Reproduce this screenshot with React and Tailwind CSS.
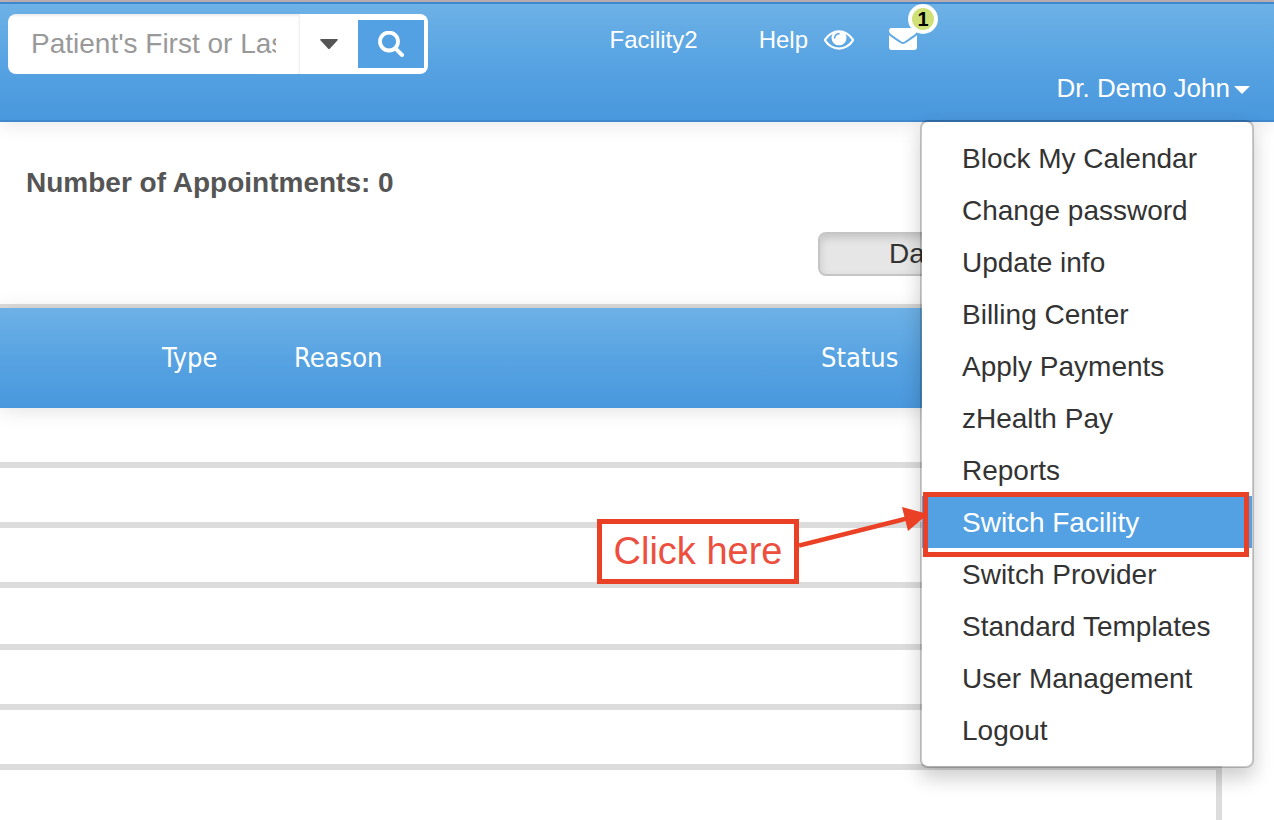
const menuItems = [
  "Block My Calendar",
  "Change password",
  "Update info",
  "Billing Center",
  "Apply Payments",
  "zHealth Pay",
  "Reports",
  "Switch Facility",
  "Switch Provider",
  "Standard Templates",
  "User Management",
  "Logout",
];

const rowHeights = ["h-[60px]", "h-[60px]", "h-[60px]", "h-[62px]", "h-[60px]", "h-[60px]"];

function EyeIcon() {
  return (
    <svg viewBox="0 384 1792 1152" className="h-5 w-[30px]" fill="currentColor" aria-hidden="true">
      <path d="M1664 960q-152-236-381-353 61 104 61 225 0 185-131.5 316.5t-316.5 131.5-316.5-131.5-131.5-316.5q0-121 61-225-229 117-381 353 133 205 333.5 326.5t434.5 121.5 434.5-121.5 333.5-326.5zm-720-384q0-20-14-34t-34-14q-125 0-214.5 89.5t-89.5 214.5q0 20 14 34t34 14 34-14 14-34q0-86 61-147t147-61q20 0 34-14t14-34zm848 384q0 34-20 69-140 230-376.5 368.5t-499.5 138.5-499.5-139-376.5-368q-20-35-20-69t20-69q140-229 376.5-368t499.5-139 499.5 139 376.5 368q20 35 20 69z" />
    </svg>
  );
}

function EnvelopeIcon() {
  return (
    <svg viewBox="0 256 1792 1408" className="h-[22px] w-7" fill="currentColor" aria-hidden="true">
      <path d="M1792 710v794q0 66-47 113t-113 47h-1472q-66 0-113-47t-47-113v-794q44 49 101 87 362 246 497 345 57 42 92.5 65.5t94.5 48 110 24.5h2q51 0 110-24.5t94.5-48 92.5-65.5q170-123 498-345 57-39 100-87zm0-294q0 79-49 151t-122 123q-376 261-468 325-10 7-42.5 31t-54 38.5-52 32.5-57.5 27-50 9h-2q-23 0-50-9t-57.5-27-52-32.5-54-38.5-42.5-31q-91-64-262-182.5t-205-142.5q-62-42-117-115.5t-55-136.5q0-78 41.5-130t118.5-52h1472q65 0 112.5 47t47.5 113z" />
    </svg>
  );
}

function SearchBox() {
  return (
    <form className="mt-2.5 ml-2 flex h-[60px] w-[420px] overflow-hidden rounded-lg bg-white" onSubmit={(e) => e.preventDefault()}>
      <input
        type="text"
        aria-label="Patient search"
        placeholder="Patient's First or Last Name"
        className="min-w-0 flex-1 border-r border-[#f0f0f0] px-[23px] text-[28px] shadow-[inset_0_2px_2px_rgba(0,0,0,0.075)] outline-none placeholder:text-[#999999]"
      />
      <button type="button" aria-label="Search options" className="flex w-[58px] items-center justify-center text-[#555555]">
        <svg viewBox="0 0 18 10" className="h-2.5 w-[18px]" fill="currentColor" aria-hidden="true">
          <path d="M1.2 0H16.8Q18.6.2 17.4 1.6L10 9.4Q9 10.4 8 9.4L.6 1.6Q-.6.2 1.2 0Z" />
        </svg>
      </button>
      <button type="submit" aria-label="Search" className="my-1.5 mr-1 flex w-[66px] items-center justify-center bg-[#53a1e2] text-white">
        <svg viewBox="0 0 26 26" className="size-[26px]" fill="none" stroke="currentColor" aria-hidden="true">
          <circle cx="11" cy="10.5" r="9" strokeWidth="3.8" />
          <path d="M17.4 17.4L24 24" strokeWidth="4" strokeLinecap="round" />
        </svg>
      </button>
    </form>
  );
}

function Callout() {
  return (
    <>
      <div className="pointer-events-none absolute -top-1 right-[3px] -bottom-[9px] left-px border-[5px] border-[#ea4025]" />
      <div className="pointer-events-none absolute top-[23px] right-full mr-[123px] flex h-[65px] w-[202px] items-center justify-center border-[5px] border-[#ea4025] bg-white text-[38px] whitespace-nowrap text-[#ec4f3d]">
        Click here
      </div>
      <svg viewBox="0 0 132 50" className="pointer-events-none absolute top-[5px] right-full -mr-[9px] h-[50px] w-[132px]" aria-hidden="true">
        <path d="M0 44.5L110 17" stroke="#ea4025" strokeWidth="4.6" />
        <path d="M129 13L103 6L109 30Z" fill="#ea4025" />
      </svg>
    </>
  );
}

function UserMenu() {
  return (
    <ul className="absolute top-[116px] right-5 z-20 w-[334px] rounded-lg border-2 border-black/20 bg-white bg-clip-padding py-2.5 shadow-[0_10px_20px_rgba(0,0,0,0.2)]">
      {menuItems.map((item) => {
        const active = item === "Switch Facility";
        return (
          <li key={item} className={active ? "relative bg-[#53a1e2] text-white" : "text-[#333333]"}>
            <a href="#" className="block h-[52px] pl-10 text-[28px] leading-[54px] whitespace-nowrap">
              {item}
            </a>
            {active && <Callout />}
          </li>
        );
      })}
    </ul>
  );
}

function Header() {
  return (
    <header className="relative z-10 border-t-2 border-[#c0b2b2]">
      <div className="relative flex h-[120px] justify-between border-y-2 border-[#3f88ce] bg-linear-to-b from-[#6db1e6] via-[#57a3e2] to-[#4997dd] shadow-[0_2px_20px_rgba(0,0,0,0.1)]">
        <SearchBox />
        <nav className="flex flex-col items-end text-white">
          <div className="mt-4 mr-[357px] flex h-10 items-center text-2xl">
            <a href="#" className="mr-[61px]">Facility2</a>
            <a href="#" className="mr-4">Help</a>
            <a href="#" aria-label="View" className="mr-[35px]">
              <EyeIcon />
            </a>
            <a href="#" aria-label="Messages" className="relative mb-0.5">
              <EnvelopeIcon />
              <span className="absolute -top-6 left-[19px] flex size-[30px] items-center justify-center rounded-full border-4 border-white bg-[#cfe077] text-xl leading-none font-bold text-black">
                1
              </span>
            </a>
          </div>
          <button type="button" className="mt-2 mr-6 flex items-center gap-1 text-[26px] leading-[40px]">
            Dr. Demo John
            <svg viewBox="0 0 16 8" className="mt-1 h-2 w-4" fill="currentColor" aria-hidden="true">
              <path d="M0 0H16L8 8Z" />
            </svg>
          </button>
        </nav>
        <UserMenu />
      </div>
    </header>
  );
}

export default function App() {
  return (
    <div className="overflow-hidden bg-white font-['Liberation_Sans',Arial,sans-serif]">
      <Header />
      <main className="mr-[52px]">
        <h1 className="pt-10 pl-[26px] text-[28px] leading-[42px] font-bold text-[#555555]">Number of Appointments: 0</h1>
        <div className="mt-7 mb-7 flex justify-end pr-[212px]">
          <button
            type="button"
            className="h-11 w-[192px] rounded-lg border-2 border-[#c5c5c5] bg-[#e6e6e6] text-[28px] leading-10 text-[#333333] shadow-[inset_0_4px_8px_rgba(0,0,0,0.15)]"
          >
            Day
          </button>
        </div>
        <table className="w-full table-fixed border-separate border-spacing-0 border-t-4 border-r-[6px] border-[#dcdcdc]">
          <colgroup>
            <col className="w-[162px]" />
            <col className="w-[132px]" />
            <col className="w-[527px]" />
            <col />
          </colgroup>
          <thead>
            <tr className="h-[100px] bg-linear-to-b from-[#6db1e6] via-[#57a3e2] to-[#4997dd] text-left font-['DejaVu_Sans_Condensed','Noto_Sans',sans-serif] text-[27px] text-white shadow-[0_2px_20px_rgba(0,0,0,0.12)]">
              <td />
              <th scope="col" className="p-0 font-normal">Type</th>
              <th scope="col" className="p-0 font-normal">Reason</th>
              <th scope="col" className="p-0 font-normal">Status</th>
            </tr>
          </thead>
          <tbody>
            {rowHeights.map((height, i) => (
              <tr key={i} className={height}>
                <td colSpan={4} className="border-b-[6px] border-[#dcdcdc] p-0" />
              </tr>
            ))}
            <tr className="h-[50px]">
              <td colSpan={4} />
            </tr>
          </tbody>
        </table>
      </main>
    </div>
  );
}
